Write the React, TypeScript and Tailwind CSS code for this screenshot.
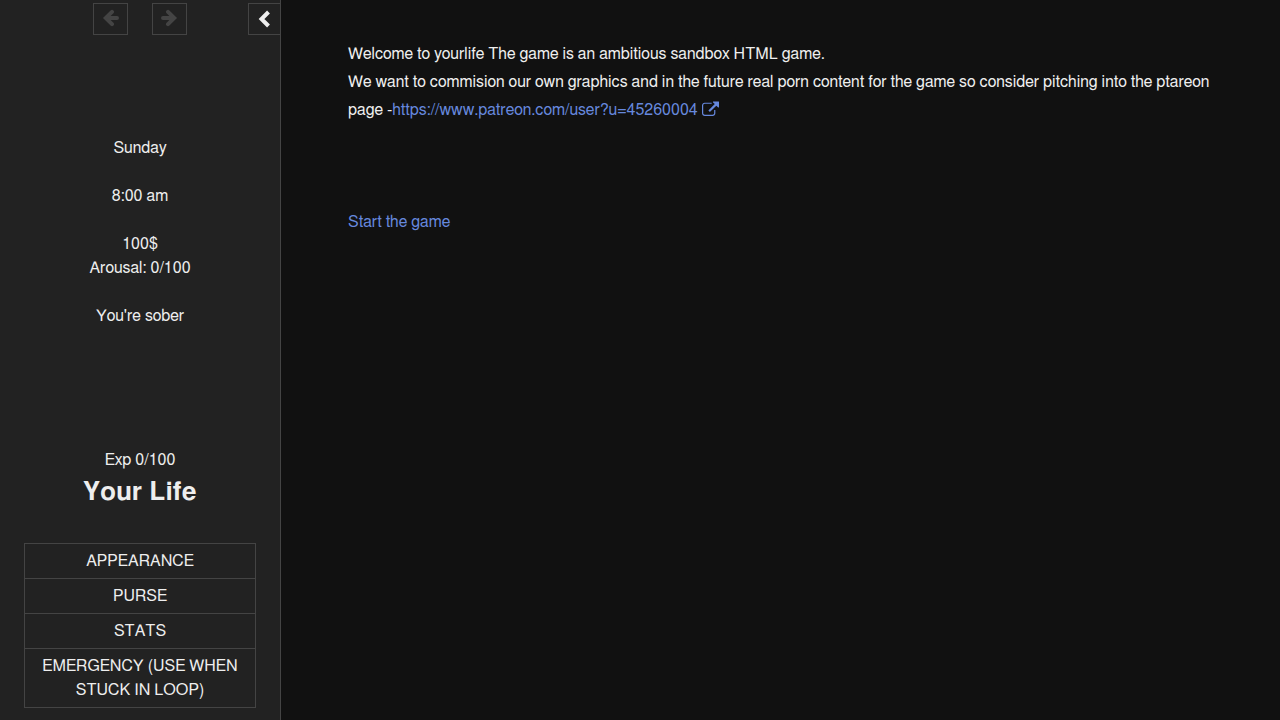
import type { ReactNode } from 'react';

const MENU_ITEMS = [
  'APPEARANCE',
  'PURSE',
  'STATS',
  'EMERGENCY (USE WHEN STUCK IN LOOP)',
];

export default function App() {
  return (
    <div className="flex min-h-screen bg-[#111] font-['FreeSans','Nimbus_Sans','TeX_Gyre_Heros','Liberation_Sans',sans-serif] text-base text-[#eee] [font-kerning:none]">
      <Sidebar />
      <main className="min-w-0 flex-1 px-[67px] pt-10 leading-7">
        <p>Welcome to yourlife The game is an ambitious sandbox HTML game.</p>
        <p>
          We want to commision our own graphics and in the future real porn content for the game so
          consider pitching into the ptareon page -
          <a href="https://www.patreon.com/user?u=45260004" className="text-[#68d] hover:underline">
            https://www.patreon.com/user?u=45260004
            <ExternalIcon />
          </a>
        </p>
        <p className="mt-21">
          <a href="#start" className="text-[#68d] hover:underline">Start the game</a>
        </p>
      </main>
    </div>
  );
}

function Sidebar() {
  return (
    <aside className="flex w-[281px] shrink-0 flex-col border-r border-[#444] bg-[#222] pb-3 leading-6">
      <div className="flex justify-end pt-[3px]">
        <HistoryButton label="Go backward" className="mr-6">
          <path d="M10 2.8 3.8 9l6.2 6.2M4 9h11" />
        </HistoryButton>
        <HistoryButton label="Go forward" className="mr-[61px]">
          <path d="M7 2.8 13.2 9 7 15.2M13 9H2" />
        </HistoryButton>
        <button
          aria-label="Toggle the sidebar"
          className="flex h-8 w-8 cursor-pointer items-center justify-center border border-r-0 border-[#444] pr-px pb-px"
        >
          <svg width="14" height="18" viewBox="0 0 14 18" fill="none" stroke="currentColor" strokeWidth="4">
            <path d="M11.5 2 4.5 9l7 7" />
          </svg>
        </button>
      </div>

      <div className="flex flex-1 flex-col px-6 pt-[101px] text-center">
        <p className="mb-6">Sunday</p>
        <p className="mb-6">8:00 am</p>
        <p>100$</p>
        <p className="mb-6">Arousal: 0/100</p>
        <p>You're sober</p>
        <p className="mt-30">Exp 0/100</p>
        <h1 className="text-[26px] leading-10 font-bold">Your Life</h1>
        <nav className="mt-[31px] border border-[#444]">
          {MENU_ITEMS.map(item => (
            <button
              key={item}
              className="block w-full cursor-pointer border-t border-[#444] px-3 py-[5px] first:border-t-0"
            >
              {item}
            </button>
          ))}
        </nav>
      </div>
    </aside>
  );
}

function HistoryButton({ label, className, children }: { label: string; className: string; children: ReactNode }) {
  return (
    <button
      disabled
      aria-label={label}
      className={`flex h-8 w-[35px] items-center justify-center border border-[#444] pb-[3px] text-[#444] ${className}`}
    >
      <svg
        width="17"
        height="18"
        viewBox="0 0 17 18"
        fill="none"
        stroke="currentColor"
        strokeWidth="4"
        strokeLinecap="round"
      >
        {children}
      </svg>
    </button>
  );
}

function ExternalIcon() {
  return (
    <svg className="ml-1 inline-block align-[-2px]" width="17" height="16" viewBox="0 0 1792 1600" fill="currentColor">
      <path d="M1408 928v320q0 119-84.5 203.5t-203.5 84.5h-832q-119 0-203.5-84.5t-84.5-203.5v-832q0-119 84.5-203.5t203.5-84.5h704q14 0 23 9t9 23v64q0 14-9 23t-23 9h-704q-66 0-113 47t-47 113v832q0 66 47 113t113 47h832q66 0 113-47t47-113v-320q0-14 9-23t23-9h64q14 0 23 9t9 23zm384-864v512q0 26-19 45t-45 19-45-19l-176-176-652 652q-10 10-23 10t-23-10l-114-114q-10-10-10-23t10-23l652-652-176-176q-19-19-19-45t19-45 45-19h512q26 0 45 19t19 45z" />
    </svg>
  );
}
